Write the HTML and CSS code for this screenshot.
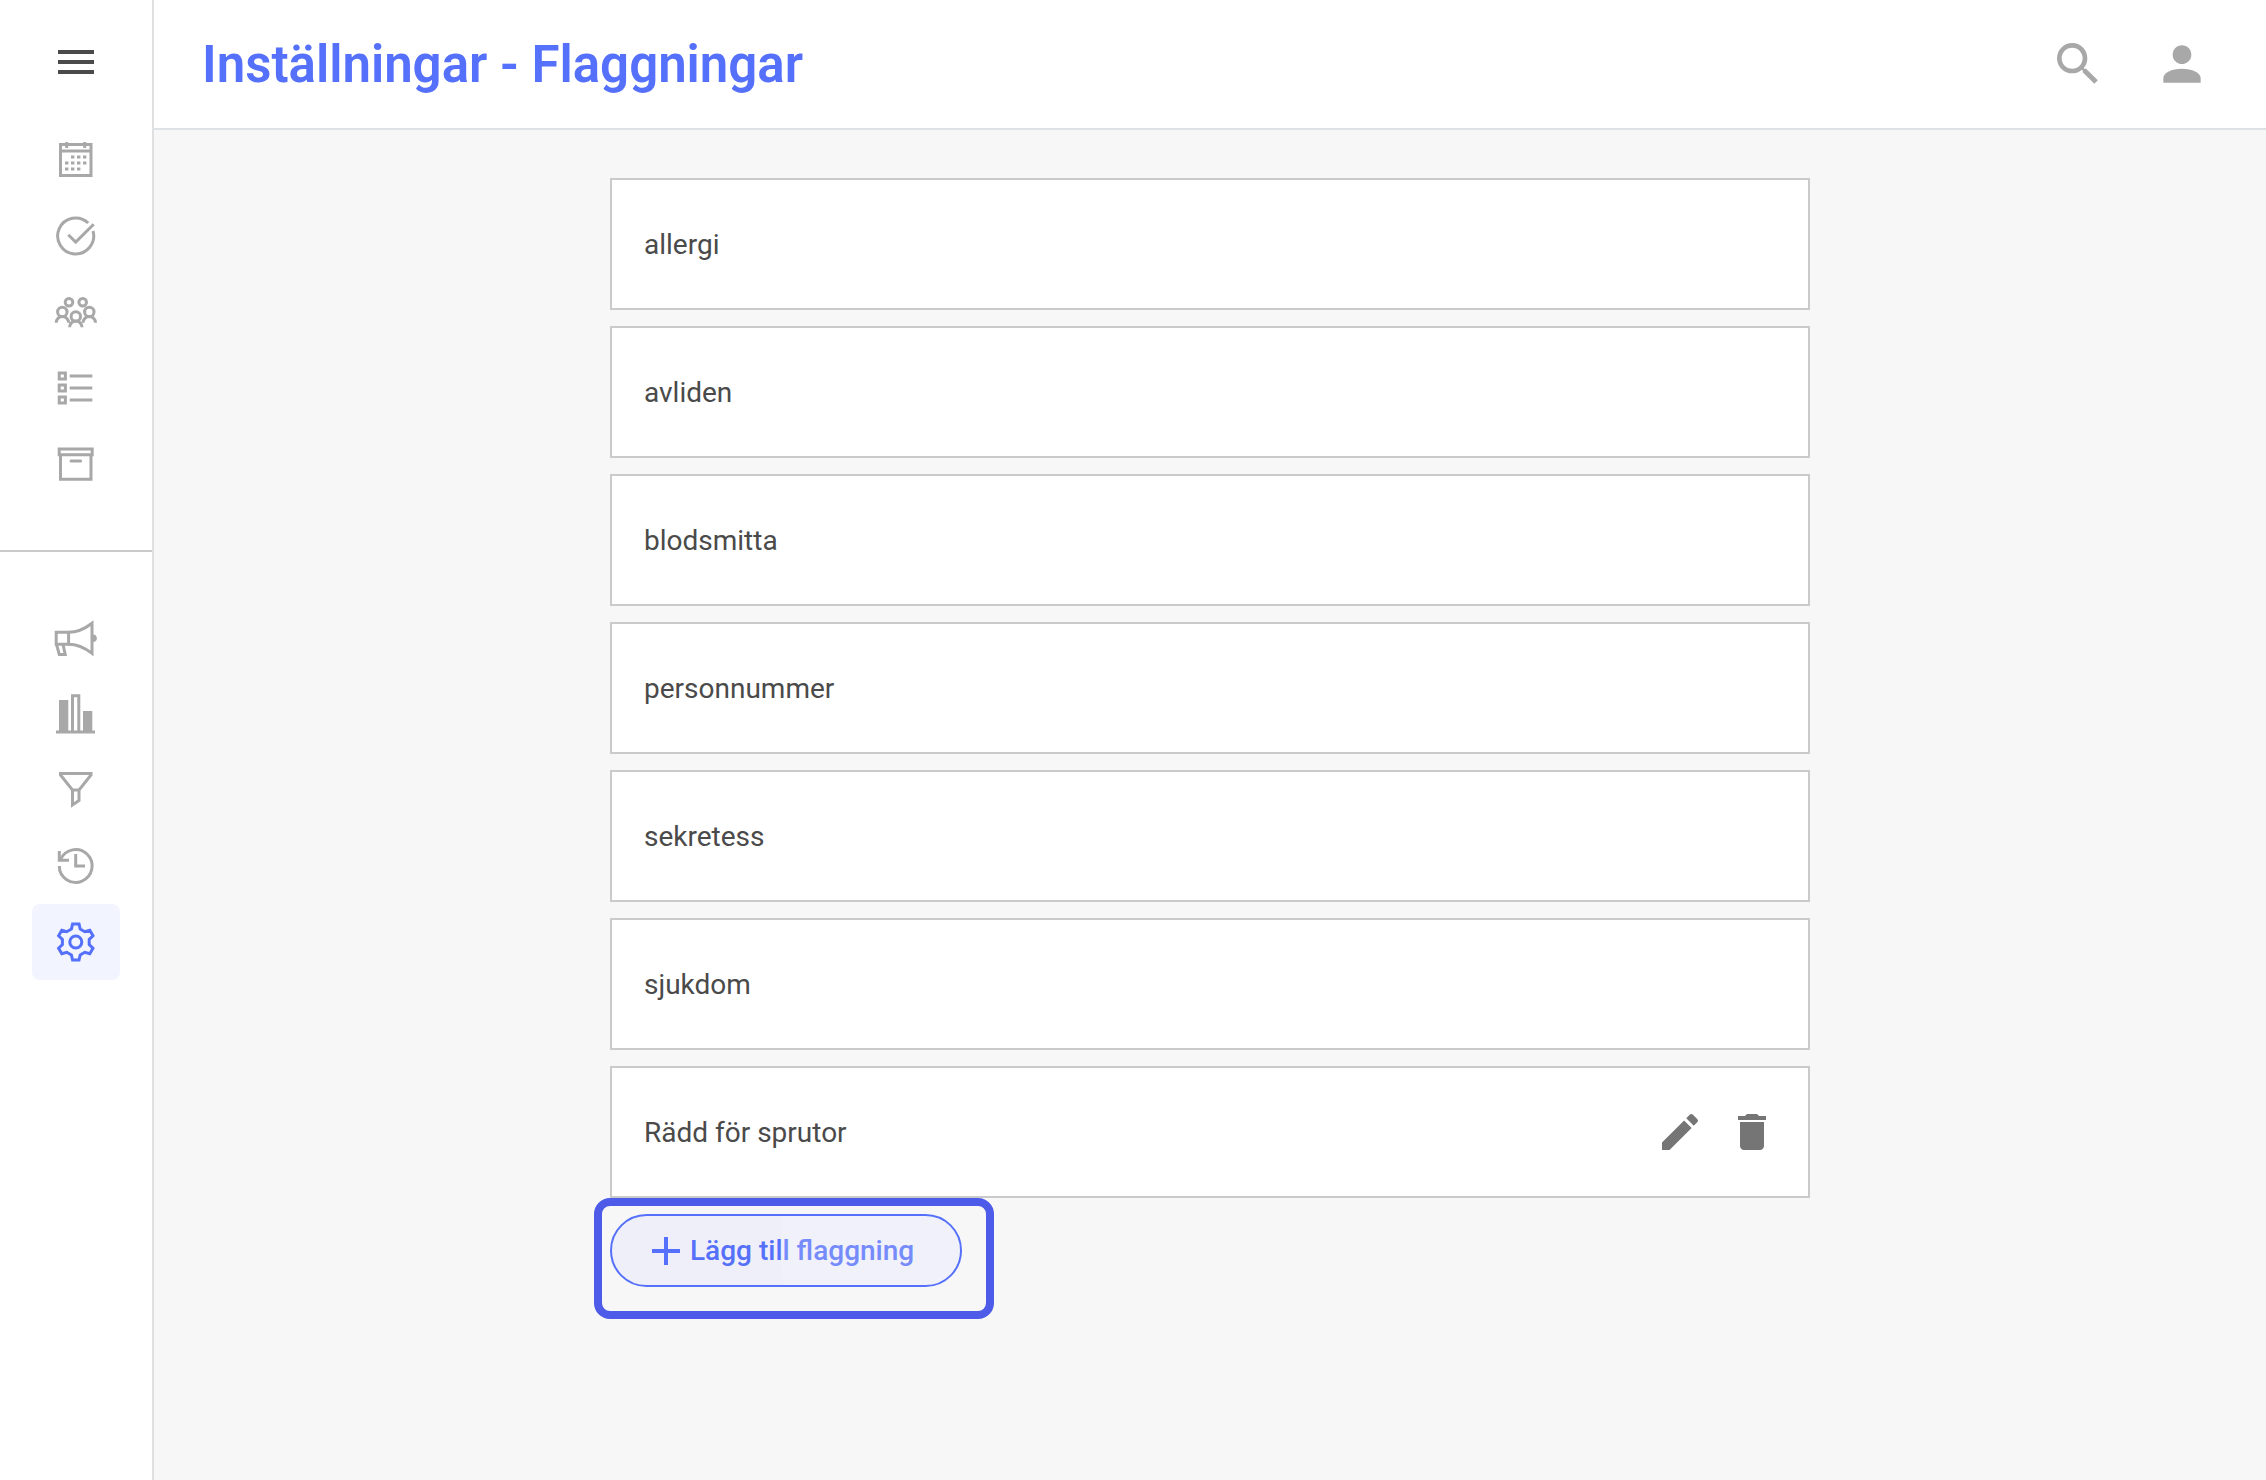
FILE: index.html
```html
<!DOCTYPE html>
<html lang="sv">
<head>
  <meta charset="UTF-8">
  <meta name="viewport" content="width=device-width, initial-scale=1">
  <title>Inställningar - Flaggningar</title>
  <link rel="stylesheet" href="styles.css">
</head>
<body>
  <aside class="sidebar">
    <button class="menu-toggle" type="button" aria-label="Meny">
      <span></span>
      <span></span>
      <span></span>
    </button>

    <nav class="nav">
      <a class="nav-item" href="#" aria-label="Kalender">
        <svg class="nav-icon" viewBox="0 0 48 48">
          <path d="M8.5 8.5h30.5v31h-30.5zM8.5 15h30.5M14.7 6v6M32.7 6v6"/>
          <path d="M19 21h3.4M25 21h3.4M31 21h3.4M13 27h3.4M19 27h3.4M25 27h3.4M31 27h3.4M13 33h3.4M19 33h3.4M25 33h3.4"/>
        </svg>
      </a>
      <a class="nav-item" href="#" aria-label="Uppgifter">
        <svg class="nav-icon" viewBox="0 0 48 48">
          <path d="M36.2 11A18 18 0 1 0 41 19"/>
          <path d="M16.3 22.7l7.4 7.4L41.7 12.3"/>
        </svg>
      </a>
      <a class="nav-item" href="#" aria-label="Grupper">
        <svg class="nav-icon" viewBox="0 0 48 48">
          <circle cx="17" cy="14.3" r="3.8"/>
          <circle cx="30.7" cy="14.3" r="3.8"/>
          <circle cx="10.3" cy="24" r="4.7"/>
          <circle cx="37.3" cy="24" r="4.7"/>
          <circle cx="23.8" cy="28.5" r="4.7"/>
          <path d="M4.2 34.7a6.2 6.2 0 0 1 12.4 0M31.1 34.7a6.2 6.2 0 0 1 12.4 0M17.6 39.2a6.2 6.2 0 0 1 12.4 0"/>
        </svg>
      </a>
      <a class="nav-item" href="#" aria-label="Lista">
        <svg class="nav-icon" viewBox="0 0 48 48">
          <path d="M7.2 8.9h6.2v6.2h-6.2zM7.2 20.9h6.2v6.2h-6.2zM7.2 32.9h6.2v6.2h-6.2z"/>
          <path d="M17.7 12h22.6M17.7 24h22.6M17.7 36h22.6"/>
        </svg>
      </a>
      <a class="nav-item" href="#" aria-label="Arkiv">
        <svg class="nav-icon" viewBox="0 0 48 48">
          <path d="M7.2 8.9h33v5.8h-33zM8.5 14.7v24.5h30.5v-24.5"/>
          <path d="M19 21h9.6" stroke-linecap="round"/>
        </svg>
      </a>
    </nav>

    <nav class="nav nav-bottom">
      <a class="nav-item" href="#" aria-label="Utskick">
        <svg class="nav-icon" viewBox="0 0 48 48">
          <path d="M4.2 18.3h12.4v12h-12.4z"/>
          <path d="M16.6 18.3C25 18.3 32 15.3 40 9.2v30.2C32 33.3 25 30.3 16.6 30.3"/>
          <path d="M4.5 30.3L7.3 40.4H13.2L11 30.3"/>
          <path class="fill" d="M41 20.500a3.800 3.800 0 0 1 0 7.600z"/>
        </svg>
      </a>
      <a class="nav-item" href="#" aria-label="Statistik">
        <svg class="nav-icon" viewBox="0 0 48 48">
          <path class="fill" d="M7 10h9.300v31H7zM31 21h9.300v20H31z"/>
          <path d="M20.500 42V5.800h6.300V42M4 42h39"/>
        </svg>
      </a>
      <a class="nav-item" href="#" aria-label="Filter">
        <svg class="nav-icon" viewBox="0 0 48 48">
          <path d="M8.500 7.500H39V9L27 24v10.500L20.500 39V24L8.500 9zM20.500 24H27"/>
        </svg>
      </a>
      <a class="nav-item" href="#" aria-label="Historik">
        <svg class="nav-icon" viewBox="0 0 48 48">
          <path d="M7.300 24A16.400 16.400 0 1 0 8.500 17.800"/>
          <path d="M7.300 9v9.300H17M23.700 12v12H33"/>
        </svg>
      </a>
      <a class="nav-item active" href="#" aria-label="Inställningar">
        <svg class="nav-icon" viewBox="0 0 48 48">
          <g transform="translate(23.800 24)">
            <path d="M-3.200-18H3.200L4.400-12.900 9-10.300 14-11.800 17.200-6.200 13.400-2.600V2.600L17.200 6.200 14 11.800 9 10.300 4.400 12.900 3.200 18H-3.200L-4.400 12.900-9 10.300-14 11.800-17.200 6.200-13.400 2.600V-2.600L-17.200-6.200-14-11.800-9-10.300-4.400-12.900z"/>
            <circle r="6"/>
          </g>
        </svg>
      </a>
    </nav>
  </aside>

  <div class="page">
    <header class="header">
      <h1>Inställningar - Flaggningar</h1>
      <div class="header-actions">
        <button class="icon-button" type="button" aria-label="Sök">
          <svg viewBox="0 0 24 24"><path d="M15.500 14h-.79l-.28-.27A6.471 6.471 0 0 0 16 9.500 6.500 6.500 0 1 0 9.500 16c1.610 0 3.090-.59 4.230-1.570l.27.28v.79l5 4.990L20.490 19l-4.990-5zm-6 0C7.010 14 5 11.990 5 9.500S7.010 5 9.500 5 14 7.010 14 9.500 11.990 14 9.500 14z"/></svg>
        </button>
        <button class="icon-button" type="button" aria-label="Konto">
          <svg viewBox="0 0 24 24"><path d="M12 12c2.210 0 4-1.790 4-4s-1.790-4-4-4-4 1.790-4 4 1.790 4 4 4zm0 2c-4.420 0-8 1.790-8 4v2h16v-2c0-2.210-3.580-4-8-4z"/></svg>
        </button>
      </div>
    </header>

    <main class="content">
      <ul class="flags">
        <li class="flag">allergi</li>
        <li class="flag">avliden</li>
        <li class="flag">blodsmitta</li>
        <li class="flag">personnummer</li>
        <li class="flag">sekretess</li>
        <li class="flag">sjukdom</li>
        <li class="flag">
          Rädd för sprutor
          <div class="flag-actions">
            <button type="button" aria-label="Redigera">
              <svg viewBox="0 0 24 24"><path d="M3 17.250V21h3.750L17.810 9.940l-3.750-3.750L3 17.250zM20.710 7.040a1 1 0 0 0 0-1.410l-2.340-2.340a1 1 0 0 0-1.410 0l-1.830 1.830 3.750 3.750 1.830-1.830z"/></svg>
            </button>
            <button type="button" aria-label="Ta bort">
              <svg viewBox="0 0 24 24"><path d="M6 19c0 1.100.9 2 2 2h8c1.100 0 2-.9 2-2V7H6v12zM19 4h-3.500l-1-1h-5l-1 1H5v2h14V4z"/></svg>
            </button>
          </div>
        </li>
      </ul>

      <div class="add-wrap">
        <button class="add-button" type="button">
          <svg viewBox="0 0 24 24"><path d="M19 13h-6v6h-2v-6H5v-2h6V5h2v6h6v2z"/></svg>
          Lägg till flaggning
        </button>
      </div>
    </main>
  </div>
</body>
</html>
```

FILE: styles.css
```css
* {
  box-sizing: border-box;
}
body {
  margin: 0;
  min-height: 100vh;
  display: flex;
  font-family: Roboto, sans-serif;
  font-size: 28px;
  color: #4a4a4a;
  background: #f7f7f7;
}
button {
  font: inherit;
  padding: 0;
  border: none;
  background: none;
  cursor: pointer;
}
svg {
  display: block;
}

/* sidebar */
.sidebar {
  width: 154px;
  flex-shrink: 0;
  display: flex;
  flex-direction: column;
  background: #fff;
  border-right: 2px solid #e0e0e0;
}
.menu-toggle {
  width: 36px;
  margin: 50px auto 48px 58px;
  display: flex;
  flex-direction: column;
  gap: 6px;
}
.menu-toggle span {
  width: 100%;
  height: 4px;
  background: #4a4a4a;
}
.nav {
  display: flex;
  flex-direction: column;
  align-items: center;
  padding-bottom: 48px;
}
.nav-bottom {
  border-top: 2px solid #cacaca;
  padding-top: 48px;
}
.nav-item {
  width: 88px;
  height: 76px;
  display: flex;
  align-items: center;
  justify-content: center;
  border-radius: 8px;
  color: #a8a8a8;
}
.nav-item.active {
  background: #f2f4ff;
  color: #5570fa;
}
.nav-icon {
  width: 48px;
  height: 48px;
  fill: none;
  stroke: currentColor;
  stroke-width: 3;
}
.nav-icon .fill {
  fill: currentColor;
  stroke: none;
}

/* header */
.page {
  flex: 1;
  min-width: 0;
}
.header {
  height: 130px;
  display: flex;
  align-items: center;
  justify-content: space-between;
  padding: 0 56px 0 48px;
  background: #fff;
  border-bottom: 2px solid #dee2e6;
}
h1 {
  margin: 0;
  font-size: 51px;
  font-weight: 600;
  color: #5570fa;
}
.header-actions {
  display: flex;
  gap: 48px;
}
.icon-button svg {
  width: 56px;
  height: 56px;
  fill: #a8a8a8;
}

/* flag list */
.content {
  max-width: 1200px;
  margin: 48px auto;
}
.flags {
  list-style: none;
  margin: 0 0 16px;
  padding: 0;
  display: flex;
  flex-direction: column;
  gap: 16px;
}
.flag {
  display: flex;
  align-items: center;
  justify-content: space-between;
  min-height: 132px;
  padding: 0 32px;
  background: #fff;
  border: 2px solid #cacaca;
}
.flag-actions {
  display: flex;
  gap: 24px;
}
.flag-actions svg {
  width: 48px;
  height: 48px;
  fill: #757575;
}

/* add button */
.add-wrap {
  position: relative;
  width: fit-content;
}
.add-wrap::after {
  content: "";
  position: absolute;
  inset: -16px -32px -32px -16px;
  border: 8px solid #4d5be8;
  border-radius: 16px;
  pointer-events: none;
}
.add-button {
  position: relative;
  overflow: hidden;
  display: flex;
  align-items: center;
  min-width: 352px;
  height: 73px;
  padding: 0 30px;
  border: 2px solid #5570fa;
  border-radius: 37px;
  background: #efeff9;
  color: #5570fa;
  font-weight: 500;
}
.add-button svg {
  width: 48px;
  height: 48px;
  fill: currentColor;
}
.add-button::after {
  content: "";
  position: absolute;
  inset: 0;
  background: radial-gradient(circle at right, rgba(247, 249, 255, 0.2) 179px, transparent 180px);
}
```
